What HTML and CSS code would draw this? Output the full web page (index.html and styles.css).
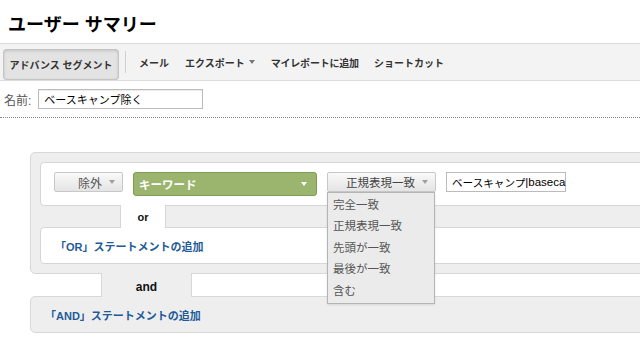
FILE: index.html
```html
<!DOCTYPE html>
<html lang="ja">

<head>
    <meta charset="utf-8">
    <meta name="viewport" content="width=device-width, initial-scale=1.0">
    <title>ユーザー サマリー</title>
    <link rel="stylesheet" href="styles.css">
</head>

<body>
    <h1 class="titel">ユーザー サマリー</h1>

    <nav class="toolbar">
        <button class="tb-knap">アドバンス セグメント</button>
        <span class="tb-streg"></span>
        <span class="tb-punkt">メール</span>
        <span class="tb-punkt">エクスポート<span class="pil pil-moerk"></span></span>
        <span class="tb-punkt smal">マイレポートに追加</span>
        <span class="tb-punkt">ショートカット</span>
    </nav>

    <div class="navn-raekke">
        <label for="navn">名前:</label>
        <input id="navn" class="navn-felt" type="text" value="ベースキャンプ除く">
    </div>

    <section class="segment">
        <div class="or-gruppe">
            <div class="betingelse">
                <div class="vaelg graa udelad">除外<span class="pil"></span></div>
                <div class="vaelg groen">キーワード<span class="pil pil-hvid"></span></div>
                <div class="match">
                    <div class="vaelg graa match-knap">正規表現一致<span class="pil"></span></div>
                    <ul class="menu">
                        <li>完全一致</li>
                        <li>正規表現一致</li>
                        <li>先頭が一致</li>
                        <li>最後が一致</li>
                        <li>含む</li>
                    </ul>
                </div>
                <div class="vaerdi"><span class="vaerdi-jp">ベースキャンプ</span><span class="vaerdi-en">|baseca</span></div>
            </div>
            <div class="forbind or-forbind"><span class="forbind-tekst">or</span></div>
            <div class="tilfoej hvid">「OR」ステートメントの追加</div>
        </div>
        <div class="forbind and-forbind"><span class="forbind-tekst">and</span></div>
        <div class="tilfoej graa-boks">「AND」ステートメントの追加</div>
    </section>
</body>

</html>
```

FILE: styles.css
```css
body {
    margin: 0;
    overflow: hidden;
    background-color: #ffffff;
    font-family: "Liberation Sans", "Noto Sans CJK JP", sans-serif;
    color: #333333;
}

.titel {
    margin: 0;
    padding: 12px 8px 0;
    font-size: 18px;
    line-height: 26px;
    font-weight: bold;
    color: #000000;
    height: 31px;
}

/* værktøjslinje */
.toolbar {
    display: flex;
    align-items: center;
    height: 36px;
    padding-left: 3px;
    background-color: #f3f3f3;
    border-top: 1px solid #dddddd;
    border-bottom: 1px solid #dddddd;
}

.tb-knap {
    align-self: flex-end;
    width: 116px;
    height: 31px;
    padding: 0;
    font-family: inherit;
    font-size: 10px;
    font-weight: bold;
    color: #333333;
    background-color: #e3e3e3;
    border: 1px solid #c4c4c4;
    border-radius: 3px;
    box-shadow: inset 0 1px 3px rgba(0, 0, 0, 0.15);
}

.tb-streg {
    width: 1px;
    height: 22px;
    margin: 0 13px 0 6px;
    background-color: #d0d0d0;
}

.tb-punkt {
    display: flex;
    align-items: center;
    margin-right: 16px;
    font-size: 10px;
    font-weight: bold;
    color: #333333;
}

.smal {
    letter-spacing: -0.2px;
    margin-right: 15px;
}

.pil {
    display: inline-block;
    width: 0;
    height: 0;
    border-left: 3.5px solid transparent;
    border-right: 3.5px solid transparent;
    border-top: 4px solid #a0a0a0;
}

.pil-moerk {
    margin-left: 4px;
    border-top-color: #777777;
}

.pil-hvid {
    border-top-color: #ffffff;
}

/* navn */
.navn-raekke {
    display: flex;
    align-items: center;
    padding: 8px 4px 8px;
    border-bottom: 1px dotted #8a8a8a;
}

.navn-raekke label {
    font-size: 12px;
    color: #555555;
    margin-right: 7px;
}

.navn-felt {
    width: 165px;
    height: 20px;
    box-sizing: border-box;
    padding: 0 5px;
    font-family: inherit;
    font-size: 11px;
    color: #000000;
    border: 1px solid #bbbbbb;
    box-shadow: inset 0 1px 1px rgba(0, 0, 0, 0.08);
}

/* segment */
.segment {
    margin: 34px 0 0 30px;
    width: 680px;
}

.or-gruppe {
    background-color: #eeeeee;
    border: 1px solid #d8d8d8;
    border-radius: 5px;
    padding: 9px 0 9px 9px;
}

.betingelse {
    display: flex;
    align-items: flex-start;
    gap: 10px;
    height: 24px;
    padding: 9px 13px 9px;
    background-color: #ffffff;
    border: 1px solid #d6d6d6;
    border-radius: 4px;
}

.vaelg {
    display: flex;
    align-items: center;
    box-sizing: border-box;
    font-size: 11.5px;
}

.graa {
    height: 20px;
    color: #555555;
    background: linear-gradient(#f9f9f9, #e4e4e4);
    border: 1px solid #c8c8c8;
    border-radius: 2px;
}

.graa .pil {
    margin-left: 7px;
}

.udelad {
    width: 69px;
    justify-content: flex-end;
    padding-right: 7px;
    font-size: 12px;
}

.groen {
    width: 184px;
    height: 24px;
    justify-content: space-between;
    padding: 0 9px 0 5px;
    font-weight: bold;
    color: #ffffff;
    background-color: #9bb46e;
    border: 1px solid #7f9b57;
    border-radius: 3px;
}

.match {
    position: relative;
}

.match-knap {
    width: 109px;
    justify-content: flex-end;
    padding-right: 7px;
    color: #444444;
}

.menu {
    position: absolute;
    top: 20px;
    left: 0;
    z-index: 2;
    width: 108px;
    box-sizing: border-box;
    margin: 0;
    padding: 2px 0 1px 5px;
    list-style: none;
    background-color: #ebebeb;
    border: 1px solid #b4b4b4;
    box-shadow: 0 1px 2px rgba(0, 0, 0, 0.1);
}

.menu li {
    font-size: 11.5px;
    line-height: 21.4px;
    color: #555555;
}

.vaerdi {
    display: flex;
    align-items: center;
    width: 120px;
    height: 20px;
    box-sizing: border-box;
    padding: 0 0 0 5px;
    white-space: nowrap;
    color: #000000;
    border: 1px solid #bbbbbb;
}

.vaerdi-jp {
    font-size: 10.6px;
}

.vaerdi-en {
    font-size: 11.5px;
}

/* or / and forbindelser */
.forbind {
    display: flex;
    align-items: flex-start;
}

.or-forbind {
    height: 21px;
    padding-left: 80px;
}

.and-forbind {
    height: 22px;
    padding-left: 71px;
}

.forbind-tekst {
    position: relative;
    z-index: 1;
    display: flex;
    align-items: center;
    justify-content: center;
    box-sizing: border-box;
    margin-top: -1px;
    font-size: 11px;
    font-weight: bold;
    color: #111111;
}

.or-forbind .forbind-tekst {
    width: 46px;
    height: 23px;
    padding-top: 1px;
    background-color: #ffffff;
    border-left: 1px solid #d6d6d6;
    border-right: 1px solid #d6d6d6;
}

.and-forbind .forbind-tekst {
    width: 91px;
    height: 24px;
    padding-top: 3px;
    font-size: 12px;
    background-color: #eeeeee;
    border-left: 1px solid #d8d8d8;
    border-right: 1px solid #d8d8d8;
}

.tilfoej {
    display: flex;
    align-items: center;
    box-sizing: border-box;
    height: 37px;
    padding-left: 14px;
    font-size: 11px;
    font-weight: bold;
    color: #1e5b98;
}

.hvid {
    background-color: #ffffff;
    border: 1px solid #d6d6d6;
    border-radius: 4px;
}

.graa-boks {
    background-color: #eeeeee;
    border: 1px solid #d8d8d8;
    border-radius: 5px;
}
```
